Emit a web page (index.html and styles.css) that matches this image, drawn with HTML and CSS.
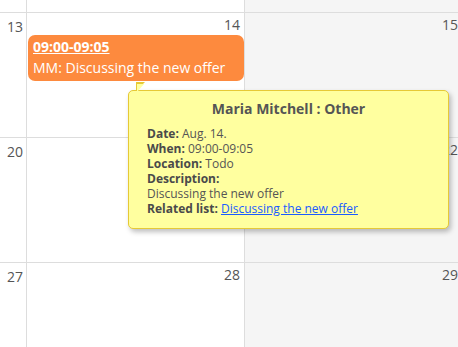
FILE: index.html
```html
<!DOCTYPE html>
<html lang="en">
<head>
    <meta charset="UTF-8">
    <title>Calendar</title>
    <link rel="stylesheet" href="styles.css">
</head>
<body>
    <div class="calendar">
        <div class="week first">
            <div class="cell side"></div>
            <div class="cell"></div>
            <div class="cell off"></div>
        </div>
        <div class="week">
            <div class="cell side"><span class="num">13</span></div>
            <div class="cell">
                <div class="num">14</div>
                <div class="event">
                    <a class="event-time" href="#">09:00-09:05</a>
                    <div class="event-title">MM: Discussing the new offer</div>
                </div>
            </div>
            <div class="cell off"><div class="num">15</div></div>
        </div>
        <div class="week">
            <div class="cell side"><span class="num">20</span></div>
            <div class="cell"><div class="num">21</div></div>
            <div class="cell off"><div class="num">22</div></div>
        </div>
        <div class="week">
            <div class="cell side"><span class="num">27</span></div>
            <div class="cell"><div class="num">28</div></div>
            <div class="cell off"><div class="num">29</div></div>
        </div>

        <!-- popup for the hovered event -->
        <div class="tooltip">
            <div class="tooltip-title">Maria Mitchell : Other</div>
            <div><b>Date:</b> Aug. 14.</div>
            <div><b>When:</b> 09:00-09:05</div>
            <div><b>Location:</b> Todo</div>
            <div><b>Description:</b></div>
            <div>Discussing the new offer</div>
            <div><b>Related list:</b> <a href="#">Discussing the new offer</a></div>
        </div>
    </div>
</body>
</html>
```

FILE: styles.css
```css
html, body {
    height: 100%;
}
body {
    margin: 0;
    overflow: hidden;
    font-family: 'Open Sans', 'Noto Sans', sans-serif;
    color: #555;
    background: white;
}
.calendar {
    position: relative;
    width: 463px;
    height: 100%;
    overflow: hidden;
}
.week {
    display: grid;
    grid-template-columns: 27px 218px 218px;
    height: 125px;
}
.week.first {
    height: 13px;
}
.cell {
    border-right: 1px solid #ddd;
    border-bottom: 1px solid #ddd;
    padding: 2px 4px 0 1px;
}
.cell.off {
    background: #f5f5f5;
}
.cell.side {
    padding: 2px 0 0 7px;
}
.num {
    font-size: 14px;
    line-height: 20px;
    text-align: right;
}
.event {
    background: #fd8a3e;
    color: white;
    border-radius: 7px;
    padding: 1px 5px 3px;
    margin-right: -4px;
    font-size: 14px;
    line-height: 21px;
}
.event-time {
    color: white;
    font-weight: bold;
}
.tooltip {
    position: absolute;
    left: 128px;
    top: 90px;
    width: 292px;
    padding: 8px 9px 12px 18px;
    background: #ffff9f;
    border: 1px solid #e6c936;
    border-radius: 5px;
    box-shadow: 2px 3px 5px rgba(0, 0, 0, 0.25);
    font-size: 12px;
    line-height: 15px;
    color: #555;
}
.tooltip::before,
.tooltip::after {
    content: '';
    position: absolute;
    left: 7px;
    border-style: solid;
    border-color: transparent;
}
.tooltip::before {
    top: -9px;
    border-width: 0 9px 9px 0;
    border-right-color: #e6c936;
    transform: scaleX(-1);
}
.tooltip::after {
    top: -7px;
    left: 8px;
    border-width: 0 7px 8px 0;
    border-right-color: #ffff9f;
    transform: scaleX(-1);
}
.tooltip-title {
    text-align: center;
    font-size: 14px;
    font-weight: bold;
    line-height: 20px;
    margin: 0 -9px 7px -18px;
}
.tooltip b {
    color: #4a4a4a;
}
.tooltip a {
    color: #1a5cff;
}
```
